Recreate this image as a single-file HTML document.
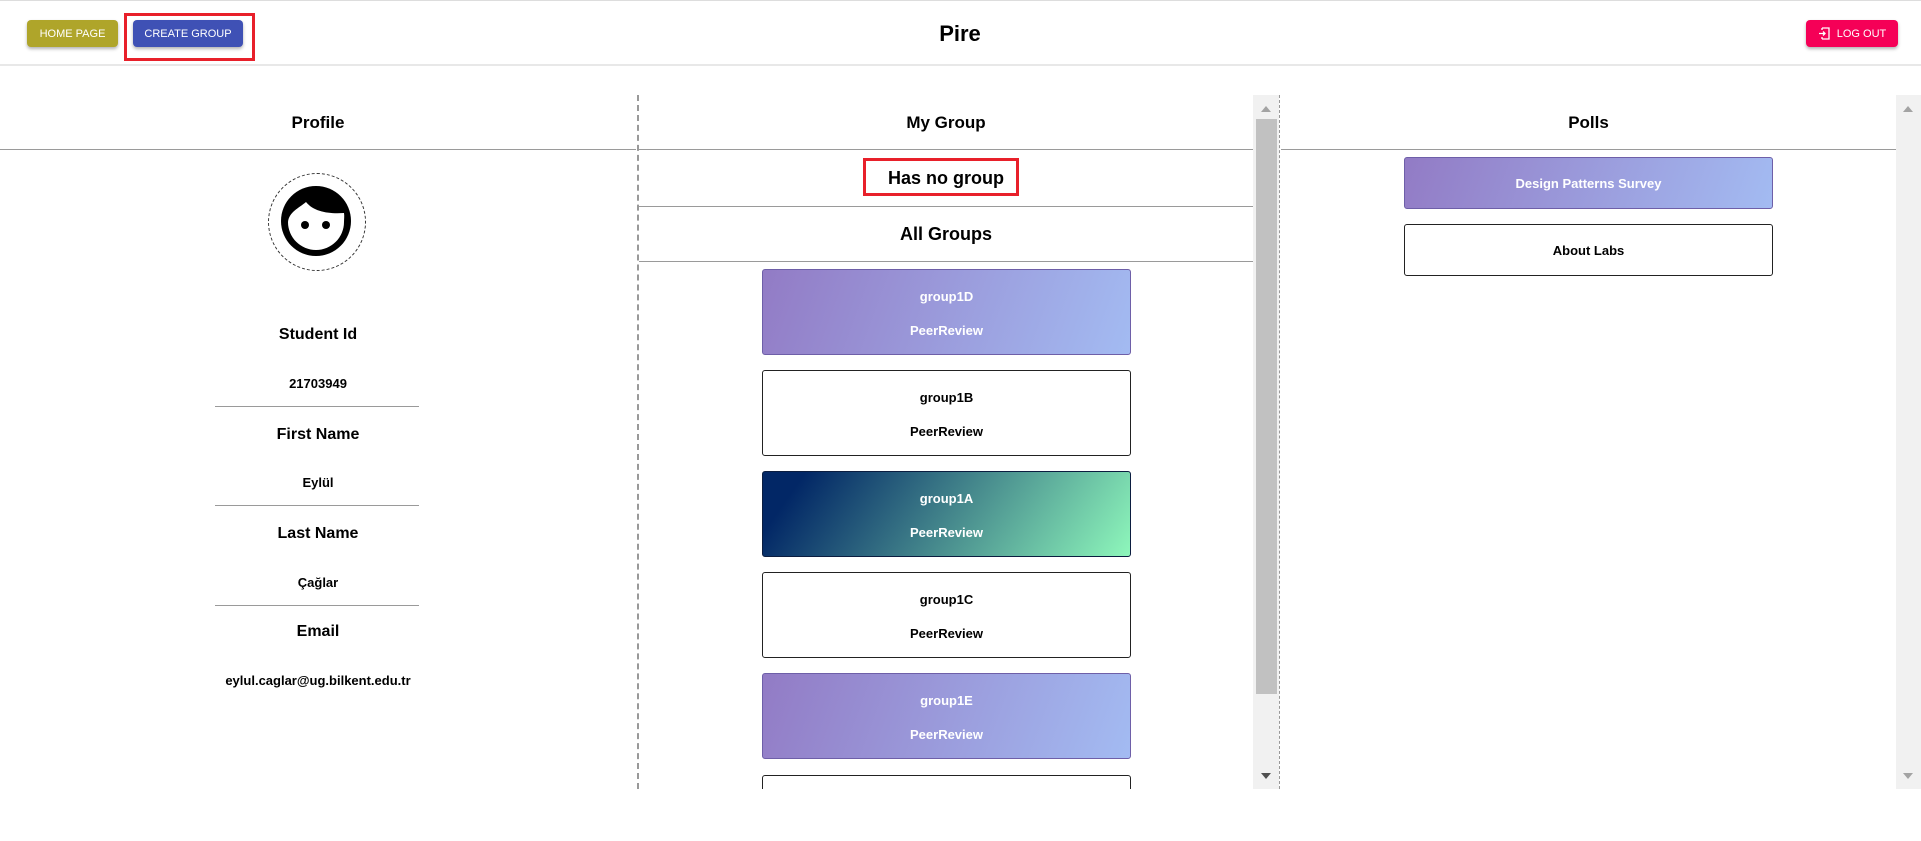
<!DOCTYPE html>
<html><head><meta charset="utf-8"><style>
*{box-sizing:border-box;margin:0;padding:0}
body{width:1921px;height:841px;position:relative;overflow:hidden;background:#fff;font-family:"Liberation Sans",sans-serif;color:#000}
.a{position:absolute}
.btn{position:absolute;height:27px;border-radius:4px;color:#fff;font-size:11px;display:flex;align-items:center;justify-content:center;box-shadow:0 2px 3px rgba(0,0,0,.3)}
.t{position:absolute;text-align:center;font-weight:bold}
.hl{position:absolute;height:1px;background:#9a9a9a}
.card{position:absolute;left:762px;width:369px;height:86px;border-radius:3px;border:1.5px solid #222;text-align:center;font-weight:bold;font-size:13px}
.card .n{position:absolute;left:0;right:0;top:19px}
.card .p{position:absolute;left:0;right:0;top:53px}
.pur{background:linear-gradient(110deg,#927bc5 0%,#a3bbf2 100%);border-color:#6e5fa8;color:#fff}
.grn{background:linear-gradient(125deg,#022766 10%,#4a8f8f 55%,#8ef7bb 100%);border-color:#0b1d40;color:#fff}
.sb{position:absolute;background:#f1f1f1}
.arr{position:absolute;width:0;height:0;border-left:5px solid transparent;border-right:5px solid transparent}
</style></head><body>
<div class="a" style="left:0;top:0;width:1921px;height:1px;background:#ddd"></div>
<div class="a" style="left:0;top:64px;width:1921px;height:2px;background:#e8e8e8"></div>
<div class="btn" style="left:27px;top:20px;width:91px;background:#afa52a">HOME PAGE</div>
<div class="a" style="left:124px;top:13px;width:131px;height:48px;border:3px solid #e8202a"></div>
<div class="btn" style="left:133px;top:20px;width:110px;background:#3f51b5">CREATE GROUP</div>
<div class="t" style="left:860px;width:200px;top:21px;font-size:22px">Pire</div>
<div class="btn" style="left:1806px;top:20px;width:92px;background:#f50057"><svg width="13" height="13" viewBox="0 0 13 13" style="margin-right:6px"><path d="M4 1h7v11H4M4 3V1M4 12v-2M1 6.5h6M5 4.5l2 2-2 2" fill="none" stroke="#fff" stroke-width="1.3"/></svg>LOG OUT</div>

<div class="t" style="left:0;width:636px;top:113px;font-size:17px">Profile</div>
<div class="hl" style="left:0;top:149px;width:636px"></div>
<div class="a" style="left:268px;top:173px;width:98px;height:98px;border-radius:50%;border:1px dashed #333"></div>
<svg class="a" style="left:281px;top:186px" width="72" height="72" viewBox="0 0 72 72">
<circle cx="35" cy="35" r="35" fill="#000"/>
<path d="M7 36 C8 26 18 22 25 16 C33 26 48 28 63 27 C63.5 30 63 33 63 36 A28 28 0 0 1 7 36 Z" fill="#fff"/>
<circle cx="24" cy="39" r="4" fill="#000"/><circle cx="45" cy="39" r="4" fill="#000"/>
</svg>
<div class="t" style="left:0;width:636px;top:326px;font-size:16px">Student Id</div>
<div class="t" style="left:0;width:636px;top:376px;font-size:13px">21703949</div>
<div class="hl" style="left:215px;top:406px;width:204px"></div>
<div class="t" style="left:0;width:636px;top:426px;font-size:16px">First Name</div>
<div class="t" style="left:0;width:636px;top:475px;font-size:13px">Eylül</div>
<div class="hl" style="left:215px;top:505px;width:204px"></div>
<div class="t" style="left:0;width:636px;top:525px;font-size:16px">Last Name</div>
<div class="t" style="left:0;width:636px;top:575px;font-size:13px">Çağlar</div>
<div class="hl" style="left:215px;top:605px;width:204px"></div>
<div class="t" style="left:0;width:636px;top:623px;font-size:16px">Email</div>
<div class="t" style="left:0;width:636px;top:673px;font-size:13px">eylul.caglar@ug.bilkent.edu.tr</div>
<div class="a" style="left:637px;top:95px;height:694px;border-left:2px dashed #999"></div>

<div class="t" style="left:639px;width:614px;top:113px;font-size:17px">My Group</div>
<div class="hl" style="left:639px;top:149px;width:614px"></div>
<div class="a" style="left:863px;top:158px;width:156px;height:38px;border:3px solid #e8202a"></div>
<div class="t" style="left:639px;width:614px;top:168px;font-size:18px">Has no group</div>
<div class="hl" style="left:639px;top:206px;width:614px"></div>
<div class="t" style="left:639px;width:614px;top:224px;font-size:18px">All Groups</div>
<div class="hl" style="left:639px;top:261px;width:614px"></div>
<div class="a" style="left:639px;top:262px;width:614px;height:527px;overflow:hidden">
<div style="position:relative;left:-639px;top:-262px">
<div class="card pur" style="top:269px"><div class="n">group1D</div><div class="p">PeerReview</div></div>
<div class="card" style="top:370px"><div class="n">group1B</div><div class="p">PeerReview</div></div>
<div class="card grn" style="top:471px"><div class="n">group1A</div><div class="p">PeerReview</div></div>
<div class="card" style="top:572px"><div class="n">group1C</div><div class="p">PeerReview</div></div>
<div class="card pur" style="top:673px"><div class="n">group1E</div><div class="p">PeerReview</div></div>
<div class="card" style="top:775px"><div class="n">group1F</div><div class="p">PeerReview</div></div>
</div></div>
<div class="sb" style="left:1253px;top:95px;width:26px;height:694px"></div>
<div class="a" style="left:1256px;top:119px;width:21px;height:575px;background:#c1c1c1"></div>
<div class="arr" style="left:1261px;top:106px;border-bottom:6px solid #a3a3a3"></div>
<div class="arr" style="left:1261px;top:773px;border-top:6px solid #505050"></div>
<div class="a" style="left:1279px;top:95px;height:694px;border-left:1px dashed #999"></div>

<div class="t" style="left:1281px;width:615px;top:113px;font-size:17px">Polls</div>
<div class="hl" style="left:1281px;top:149px;width:615px"></div>
<div class="card pur" style="left:1404px;top:157px;height:52px;display:flex;align-items:center;justify-content:center">Design Patterns Survey</div>
<div class="card" style="left:1404px;top:224px;height:52px;display:flex;align-items:center;justify-content:center">About Labs</div>
<div class="sb" style="left:1896px;top:95px;width:25px;height:694px"></div>
<div class="arr" style="left:1903px;top:106px;border-bottom:6px solid #a3a3a3"></div>
<div class="arr" style="left:1903px;top:773px;border-top:6px solid #a3a3a3"></div>
</body></html>
